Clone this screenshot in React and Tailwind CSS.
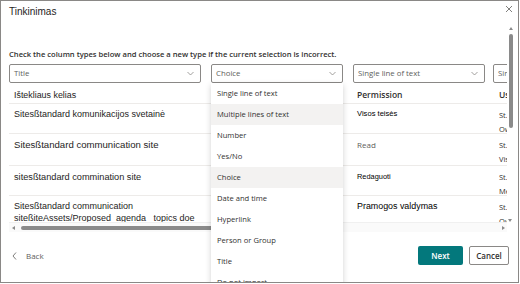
import React from 'react';

const menuItems = [
  'Single line of text',
  'Multiple lines of text',
  'Number',
  'Yes/No',
  'Choice',
  'Date and time',
  'Hyperlink',
  'Person or Group',
  'Title',
  'Do not import',
];
const highlighted = ['Multiple lines of text', 'Choice'];

function Chevron() {
  return (
    <svg width="7" height="5" viewBox="0 0 7 5" className="shrink-0">
      <path d="M0.5 1 L3.5 4 L6.5 1" fill="none" stroke="#8a8886" strokeWidth="0.8" />
    </svg>
  );
}

function Select({ label, width, chevron = true }) {
  return (
    <div
      className={`h-[19px] shrink-0 border border-[#8a8886] rounded-[2px] flex items-center justify-between pl-[4px] pr-[6px] text-[7.8px] text-[#605e5c] bg-white ${width}`}
    >
      <span className="whitespace-nowrap">{label}</span>
      {chevron && <Chevron />}
    </div>
  );
}

export default function App() {
  const arial = { fontFamily: '"Liberation Sans", Arial, sans-serif' };

  return (
    <div className="w-[520px] h-[284px] bg-white" style={{ fontFamily: '"Open Sans", "Noto Sans", sans-serif' }}>
      <div className="relative w-[519px] h-[283px] border border-[#8a8886] overflow-hidden flex flex-col bg-white">
        {/* header */}
        <div className="h-[21px] flex items-center justify-between pl-[8px] pr-[5px] shrink-0">
          <span className="text-[10px] text-[#252423] leading-none mt-[1px]" style={arial}>Tinkinimas</span>
          <svg width="8" height="8" viewBox="0 0 8 8" className="mb-[5px]">
            <path d="M1 1 L7 7 M7 1 L1 7" stroke="#605e5c" strokeWidth="0.8" />
          </svg>
        </div>

        {/* scrolling body */}
        <div className="relative h-[210px] shrink-0 pt-[27px]">
          <p className="pl-[8px] text-[7.6px] font-semibold leading-[10px] text-[#323130] whitespace-nowrap">
            Check the column types below and choose a new type if the current selection is incorrect.
          </p>

          <div className="ml-[8px] w-[498px] overflow-hidden">
            <div className="flex mt-[5px] w-[560px]">
              <Select label="Title" width="w-[192px] mr-[10px]" />
              <Select label="Choice" width="w-[132px] mr-[10px]" />
              <Select label="Single line of text" width="w-[132px] mr-[8px]" />
              <Select label="Single line of text" width="w-[132px]" />
            </div>

            <div className="w-[620px]">
              {/* header row */}
              <div className="flex h-[20px] items-end pb-[2px]">
                <div className="w-[202px] pl-[5px] text-[8.9px] text-[#252423] leading-[12px]" style={arial}>Ištekliaus kelias</div>
                <div className="w-[142px]" />
                <div className="w-[140px] pl-[4px] text-[8.5px] font-semibold text-[#323130] leading-[12px]">Permission</div>
                <div className="pl-[6px] text-[8.5px] font-semibold text-[#323130] leading-[12px]">User</div>
              </div>

              {/* row 1 */}
              <div className="flex h-[30px] border-t border-[#edebe9] pt-[4px]">
                <div className="w-[202px] pl-[5px] text-[9px] text-[#252423] leading-[12px] whitespace-nowrap" style={arial}>Sitesßtandard komunikacijos svetainė</div>
                <div className="w-[142px]" />
                <div className="w-[140px] pl-[4px] text-[7.6px] text-black leading-[12px]" style={arial}>Visos teisės</div>
                <div className="pl-[6px] text-[7.5px] text-[#323130] leading-[14px]">St.<br />Owners</div>
              </div>

              {/* row 2 */}
              <div className="flex h-[32px] border-t border-[#edebe9] pt-[5px]">
                <div className="w-[202px] pl-[5px] text-[9.6px] text-[#252423] leading-[12px] whitespace-nowrap" style={arial}>Sitesßtandard communication site</div>
                <div className="w-[142px]" />
                <div className="w-[140px] pl-[4px] text-[8px] text-[#605e5c] leading-[12px]">Read</div>
                <div className="pl-[6px] text-[7.5px] text-[#323130] leading-[14px] -mt-[1px]">St.<br />Visitors</div>
              </div>

              {/* row 3 */}
              <div className="flex h-[30px] border-t border-[#edebe9] pt-[5px]">
                <div className="w-[202px] pl-[5px] text-[9.2px] text-[#252423] leading-[12px] whitespace-nowrap" style={arial}>sitesßtandard commination site</div>
                <div className="w-[142px]" />
                <div className="w-[140px] pl-[4px] text-[7.4px] text-black leading-[12px]" style={arial}>Redaguoti</div>
                <div className="pl-[6px] text-[7.5px] text-[#323130] leading-[14px] -mt-[1px]">St.<br />Members</div>
              </div>

              {/* row 4 */}
              <div className="flex h-[30px] border-t border-[#edebe9] pt-[4px]">
                <div className="w-[202px] pl-[5px] text-[9px] text-[#252423] leading-[12px] whitespace-nowrap" style={arial}>
                  Sitesßtandard communication<br />siteßiteAssets/Proposed_agenda_ topics doe
                </div>
                <div className="w-[142px]" />
                <div className="w-[140px] pl-[4px] text-[8.9px] text-black leading-[12px]" style={arial}>Pramogos valdymas</div>
                <div className="pl-[6px] text-[7.5px] text-[#323130] leading-[14px]">St.<br />Owners</div>
              </div>
            </div>
          </div>

          {/* horizontal scrollbar */}
          <div className="absolute left-[8px] top-[200px] w-[498px] h-[10px] bg-[#fafafa] border-t border-[#f0f0f0]">
            <div className="absolute left-[3px] top-[3px] w-0 h-0 border-y-[2.5px] border-y-transparent border-r-[3px] border-r-[#8a8a8a]" />
            <div className="absolute left-[12px] top-[3px] w-[320px] h-[4px] rounded-full bg-[#8a8a8a]" />
            <div className="absolute right-[2px] top-[3px] w-0 h-0 border-y-[2.5px] border-y-transparent border-l-[3px] border-l-[#8a8a8a]" />
          </div>

          {/* vertical scrollbar */}
          <div className="absolute left-[507px] top-[3px] w-[6px] h-[198px]">
            <div className="absolute left-[1px] top-[2px] w-0 h-0 border-x-[2.5px] border-x-transparent border-b-[3px] border-b-[#8a8a8a]" />
            <div className="absolute left-[1px] top-[9px] w-[4px] h-[94px] rounded-full bg-[#8a8a8a]" />
            <div className="absolute left-[0px] bottom-[1px] w-0 h-0 border-x-[2.5px] border-x-transparent border-t-[3px] border-t-[#8a8a8a]" />
          </div>
        </div>

        {/* footer */}
        <div className="h-[47px] shrink-0 flex items-center justify-between pl-[11px] pr-[9px]">
          <div className="flex items-center gap-[9px] text-[8px] text-[#605e5c]">
            <svg width="5" height="8" viewBox="0 0 5 8">
              <path d="M4 0.5 L1 4 L4 7.5" fill="none" stroke="#605e5c" strokeWidth="0.8" />
            </svg>
            <span>Back</span>
          </div>
          <div className="flex items-center gap-[6px]">
            <button className="w-[45px] h-[19px] rounded-[2px] bg-[#03787c] text-white text-[8px] font-semibold">Next</button>
            <button className="w-[40px] h-[19px] rounded-[2px] border border-[#8a8886] bg-white text-[#323130] text-[8px] font-semibold">Cancel</button>
          </div>
        </div>

        {/* open dropdown menu */}
        <div className="absolute left-[210px] top-[82px] w-[132px] bg-white shadow-[0_2px_6px_rgba(0,0,0,0.18)]">
          {menuItems.map((item) => (
            <div
              key={item}
              className={`h-[21px] flex items-center pl-[6px] text-[7.6px] text-[#323130] whitespace-nowrap ${
                highlighted.includes(item) ? 'bg-[#f3f2f1]' : ''
              }`}
            >
              {item}
            </div>
          ))}
        </div>
      </div>
    </div>
  );
}
